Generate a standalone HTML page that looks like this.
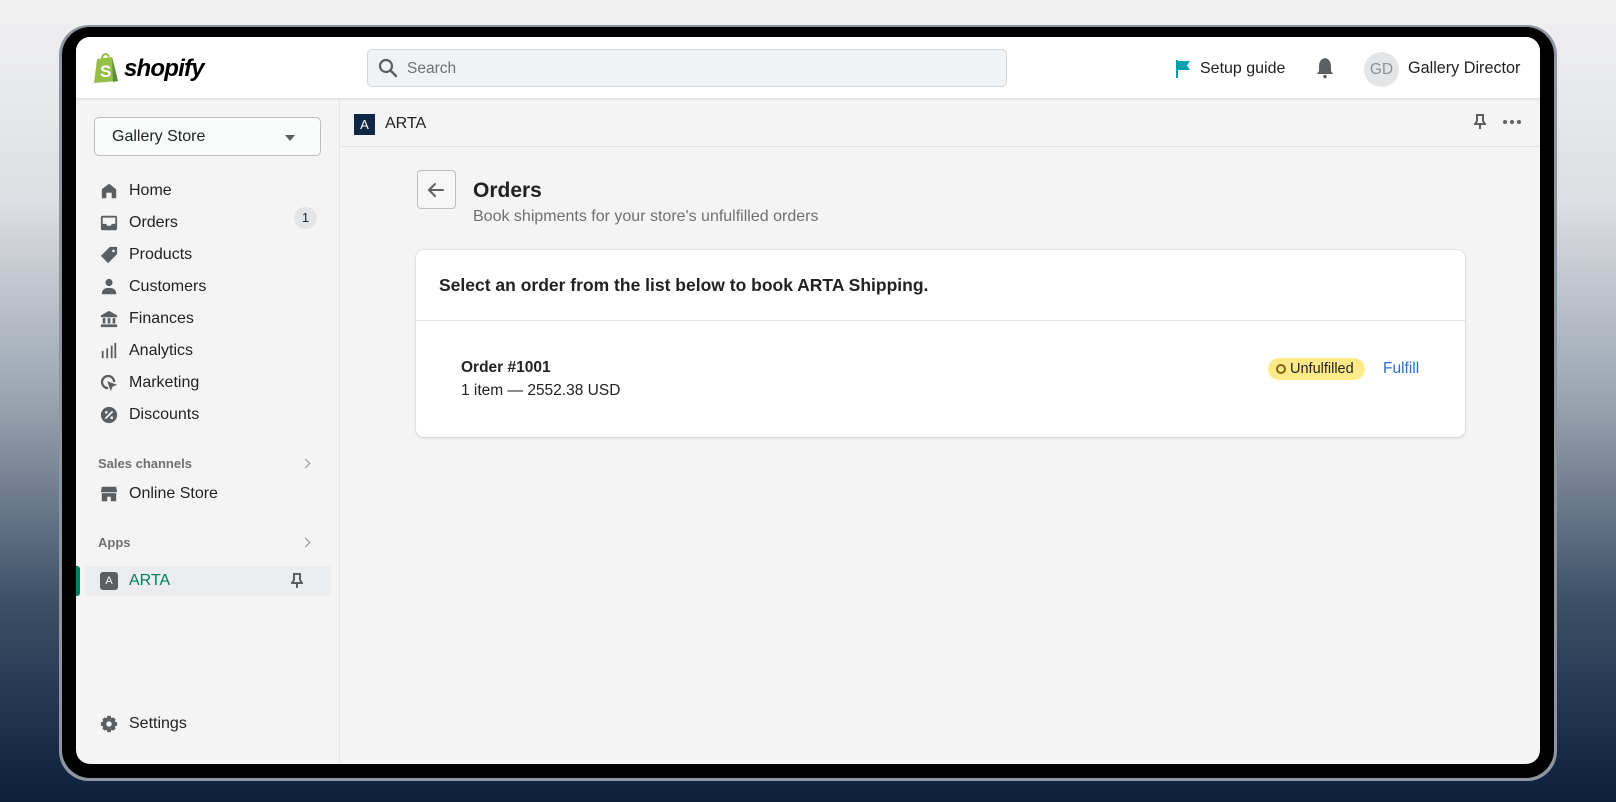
<!DOCTYPE html>
<html><head><meta charset="utf-8"><style>
*{box-sizing:border-box;margin:0;padding:0}
body{width:1616px;height:802px;overflow:hidden;font-family:"Liberation Sans",sans-serif;color:#202223;
background:linear-gradient(180deg,#f1f1f2 0%,#dcdfe3 25%,#9aa4b0 50%,#3d5068 75%,#0b1f3b 100%);position:relative}
.ring{position:absolute;left:59px;top:25px;width:1498px;height:756px;border-radius:30px;background:#8d96a0}
.frame{position:absolute;left:62px;top:27px;width:1492px;height:751px;border-radius:28px;background:#000}
.screen{position:absolute;left:76px;top:37px;width:1464px;height:727px;border-radius:14px;background:#f4f4f4;overflow:hidden}
.top{position:absolute;left:0;top:0;width:100%;height:62px;background:#fff;border-bottom:1px solid #e1e3e5;box-shadow:0 1px 2px rgba(0,0,0,.06)}
.abs{position:absolute}
.side{position:absolute;left:0;top:62px;width:264px;bottom:0;border-right:1px solid #e1e3e5}
.nav{position:absolute;left:24px;font-size:16px;color:#202223;display:flex;align-items:center}
.nav svg{width:18px;height:18px;margin-right:11px;fill:#5c5f62}
.sec{position:absolute;left:22px;font-size:13px;color:#6d7175;font-weight:bold}
.chev{position:absolute;left:226px;width:7px;height:7px;border-right:1.6px solid #8c9196;border-top:1.6px solid #8c9196;transform:rotate(45deg)}
</style></head><body>
<div class="ring"></div><div class="frame"></div>
<div class="screen">
 <div class="top">
  <svg class="abs" style="left:17px;top:15px" width="27" height="31" viewBox="0 0 27 31"><path d="M4 7 L19 5 L25 29 L1 31 Z" fill="#95bf47"/><path d="M19 5 L25 29 L20 30 Z" fill="#5e8e3e"/><path d="M9 7 C9 2 14 0 16 5" stroke="#95bf47" stroke-width="2" fill="none"/><text x="7" y="25" font-size="17" font-weight="bold" fill="#fff" font-family="Liberation Sans">S</text></svg>
  <div class="abs" style="left:48px;top:18px;font-size:24px;font-weight:bold;font-style:italic;letter-spacing:-0.8px;color:#000">shopify</div>
  <div class="abs" style="left:291px;top:12px;width:640px;height:38px;background:#f1f2f3;border:1px solid #d2d5d8;border-radius:5px"></div>
  <svg class="abs" style="left:302px;top:21px" width="20" height="20" viewBox="0 0 20 20"><circle cx="8" cy="8" r="6" stroke="#5c5f62" stroke-width="2.2" fill="none"/><path d="M12.5 12.5 L18 18" stroke="#5c5f62" stroke-width="2.4" stroke-linecap="round"/></svg>
  <div class="abs" style="left:331px;top:23px;font-size:15.5px;color:#6d7175">Search</div>
  <svg class="abs" style="left:1099px;top:22px" width="16" height="20" viewBox="0 0 16 20"><path d="M2 1 L2 19" stroke="#00a0ac" stroke-width="2"/><path d="M2 2 L15 2 L12 6.5 L15 11 L2 11Z" fill="#00a0ac"/></svg>
  <div class="abs" style="left:1124px;top:23px;font-size:16px">Setup guide</div>
  <svg class="abs" style="left:1239px;top:20px" width="20" height="22" viewBox="0 0 20 22"><path d="M10 1 C5 2 4 6 4 10 L4 14 L2 17 L18 17 L16 14 L16 10 C16 6 15 2 10 1Z" fill="#5c5f62"/><circle cx="10" cy="19.5" r="1.8" fill="#5c5f62"/></svg>
  <div class="abs" style="left:1288px;top:15px;width:35px;height:35px;border-radius:50%;background:#e4e5e7;color:#8c9196;font-size:15.5px;text-align:center;line-height:35px">GD</div>
  <div class="abs" style="left:1332px;top:22px;font-size:16.2px">Gallery Director</div>
 </div>
 <div class="side">
  <div class="abs" style="left:18px;top:18px;width:227px;height:39px;background:#fafbfb;border:1px solid #babfc3;border-radius:5px"></div>
  <div class="abs" style="left:36px;top:29px;font-size:16px">Gallery Store</div>
  <div class="abs" style="left:209px;top:36px;border-left:5px solid transparent;border-right:5px solid transparent;border-top:6px solid #5c5f62"></div>
  <div class="nav" style="top:83px"><svg viewBox="0 0 20 20"><path d="M10 2 L18 8 L18 18 L13 18 L13 12 L7 12 L7 18 L2 18 L2 8Z"/></svg>Home</div>
  <div class="nav" style="top:115px"><svg viewBox="0 0 20 20"><path d="M3 2 H17 Q19 2 19 4 V16 Q19 18 17 18 H3 Q1 18 1 16 V4 Q1 2 3 2Z M3 4 V11 H7 L8 13 H12 L13 11 H17 V4Z"/></svg>Orders</div>
  <div class="abs" style="left:218px;top:108px;width:23px;height:22px;border-radius:11px;background:#e4e5e7;font-size:13px;text-align:center;line-height:22px">1</div>
  <div class="nav" style="top:147px"><svg viewBox="0 0 20 20"><path d="M11 1 H19 V9 L9 19 L1 11Z M15 4 a1.5 1.5 0 1 0 0.01 0Z" fill-rule="evenodd"/></svg>Products</div>
  <div class="nav" style="top:179px"><svg viewBox="0 0 20 20"><circle cx="10" cy="5" r="4"/><path d="M2 18 Q2 11 10 11 Q18 11 18 18Z"/></svg>Customers</div>
  <div class="nav" style="top:211px"><svg viewBox="0 0 20 20"><path d="M10 1 L19 6 V8 H1 V6Z M3 9 H6 V15 H3Z M8.5 9 H11.5 V15 H8.5Z M14 9 H17 V15 H14Z M1 16 H19 V19 H1Z"/></svg>Finances</div>
  <div class="nav" style="top:243px"><svg viewBox="0 0 20 20"><rect x="2" y="10" width="2" height="8"/><rect x="7" y="7" width="2" height="11"/><rect x="12" y="4" width="2" height="14"/><rect x="16" y="1" width="2" height="17"/></svg>Analytics</div>
  <div class="nav" style="top:275px"><svg viewBox="0 0 20 20"><path d="M9 1 a8 8 0 0 1 8 8 h-2.5 a5.5 5.5 0 1 0 -5.5 5.5 V17 a8 8 0 0 1 0 -16Z M8 8 L19 12 L14 14 L12 19Z"/></svg>Marketing</div>
  <div class="nav" style="top:307px"><svg viewBox="0 0 20 20"><circle cx="10" cy="10" r="9"/><path d="M6 14 L14 6" stroke="#f4f4f4" stroke-width="2"/><circle cx="7" cy="7" r="1.5" fill="#f4f4f4"/><circle cx="13" cy="13" r="1.5" fill="#f4f4f4"/></svg>Discounts</div>
  <div class="sec" style="top:357px">Sales channels</div><div class="chev" style="top:361px"></div>
  <div class="nav" style="top:386px"><svg viewBox="0 0 20 20"><path d="M2 2 H18 L19 8 H1Z M2 9 H18 V18 H12 V13 H8 V18 H2Z"/></svg>Online Store</div>
  <div class="sec" style="top:436px">Apps</div><div class="chev" style="top:440px"></div>
  <div class="abs" style="left:0;top:467px;width:4px;height:30px;background:#008060;border-radius:0 3px 3px 0"></div>
  <div class="abs" style="left:9px;top:467px;width:246px;height:30px;background:#ebeced;border-radius:3px"></div>
  <div class="abs" style="left:24px;top:473px;width:18px;height:18px;border-radius:3px;background:#5c5f62;color:#fff;font-size:11px;text-align:center;line-height:18px">A</div>
  <div class="abs" style="left:53px;top:473px;font-size:16px;color:#007f5f">ARTA</div>
  <svg class="abs" style="left:215px;top:474px" width="12" height="16" viewBox="0 0 12 16"><path d="M2 1 H10 M3 1 V7 L1 10 H11 L9 7 V1 M6 10 V15" stroke="#5c5f62" stroke-width="2" fill="none"/></svg>
  <div class="nav" style="top:616px"><svg viewBox="0 0 20 20"><path d="M8 1 H12 L12.6 3.6 L15 2.6 L17.4 5 L16.4 7.4 L19 8 V12 L16.4 12.6 L17.4 15 L15 17.4 L12.6 16.4 L12 19 H8 L7.4 16.4 L5 17.4 L2.6 15 L3.6 12.6 L1 12 V8 L3.6 7.4 L2.6 5 L5 2.6 L7.4 3.6Z M10 7 a3 3 0 1 0 0.01 0Z" fill-rule="evenodd"/></svg>Settings</div>
 </div>
 <div class="abs" style="left:265px;top:62px;right:0;height:48px;border-bottom:1px solid #e1e3e5"></div>
 <div class="abs" style="left:278px;top:77px;width:21px;height:21px;background:#0e2745;color:#fff;font-size:13px;text-align:center;line-height:21px">A</div>
 <div class="abs" style="left:309px;top:78px;font-size:16px">ARTA</div>
 <svg class="abs" style="left:1398px;top:77px" width="12" height="16" viewBox="0 0 12 16"><path d="M2 1 H10 M3 1 V7 L1 10 H11 L9 7 V1 M6 10 V15" stroke="#5c5f62" stroke-width="2" fill="none"/></svg>
 <div class="abs" style="left:1427px;top:83px;font-size:0">
  <span style="display:inline-block;width:4px;height:4px;border-radius:50%;background:#5c5f62;margin-right:3px"></span><span style="display:inline-block;width:4px;height:4px;border-radius:50%;background:#5c5f62;margin-right:3px"></span><span style="display:inline-block;width:4px;height:4px;border-radius:50%;background:#5c5f62"></span></div>
 <div class="abs" style="left:341px;top:133px;width:39px;height:39px;border:1px solid #babfc3;border-radius:4px;background:#f6f6f7"></div>
 <svg class="abs" style="left:350px;top:143px" width="20" height="20" viewBox="0 0 20 20"><path d="M17 10 H3 M9 4 L3 10 L9 16" stroke="#5c5f62" stroke-width="2" fill="none" stroke-linecap="round"/></svg>
 <div class="abs" style="left:397px;top:142px;font-size:21px;font-weight:bold;color:#202223">Orders</div>
 <div class="abs" style="left:397px;top:171px;font-size:16px;color:#6d7175">Book shipments for your store's unfulfilled orders</div>
 <div class="abs" style="left:340px;top:213px;width:1049px;height:187px;background:#fff;border-radius:8px;box-shadow:0 0 0 1px rgba(63,63,68,.05),0 1px 3px rgba(63,63,68,.15)">
  <div class="abs" style="left:23px;top:25px;font-size:17.5px;font-weight:bold">Select an order from the list below to book ARTA Shipping.</div>
  <div class="abs" style="left:0;top:70px;width:100%;height:1px;background:#e1e3e5"></div>
  <div class="abs" style="left:45px;top:109px;font-size:15.5px;font-weight:bold;color:#202223">Order #1001</div>
  <div class="abs" style="left:45px;top:132px;font-size:15.5px">1 item — 2552.38 USD</div>
  <div class="abs" style="left:852px;top:108px;width:97px;height:22px;border-radius:11px;background:#ffea8a"></div>
  <div class="abs" style="left:860px;top:114px;width:10px;height:10px;border-radius:50%;border:2.3px solid #8a6116"></div>
  <div class="abs" style="left:874px;top:111px;font-size:14.5px">Unfulfilled</div>
  <div class="abs" style="left:967px;top:110px;font-size:15.5px;color:#2c6ecb">Fulfill</div>
 </div>
</div>
</body></html>
